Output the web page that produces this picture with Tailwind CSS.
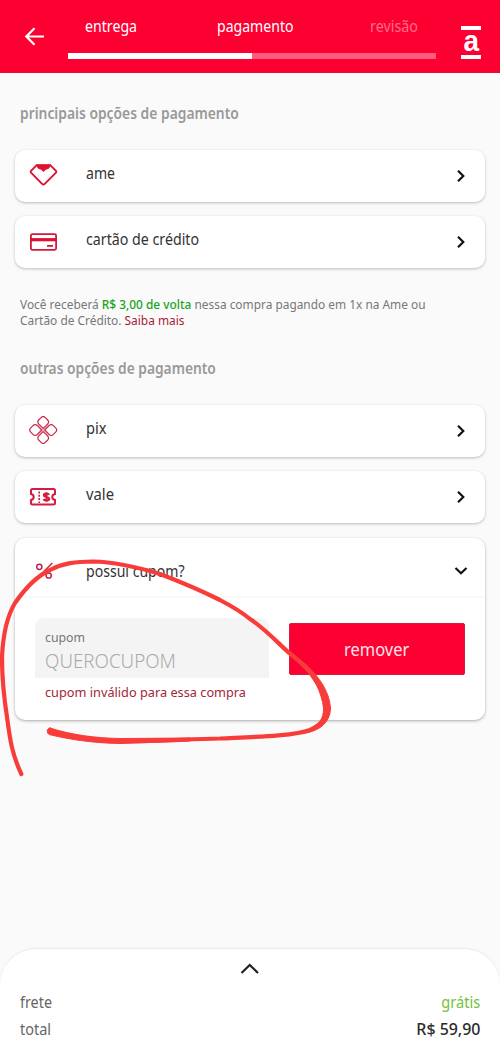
<!DOCTYPE html>
<html lang="pt-BR"><head><meta charset="utf-8"><title>pagamento</title>
<script src="https://cdn.jsdelivr.net/npm/@tailwindcss/browser@4"></script></head>
<body class="bg-[#fafafa]">
<div class="relative w-[500px] h-[1052px] overflow-hidden bg-[#fafafa] font-['Noto_Sans',sans-serif] text-[#333] flex flex-col whitespace-nowrap">
<header class="h-[73px] shrink-0 bg-[#fc0032] border-b border-[#dd1039] flex text-white">
  <div class="w-[68px] pt-[26px] pl-[23px]"><svg width="22" height="22" viewBox="0 0 22 22" fill="none" stroke="#fff" stroke-width="2.2"><path d="M21 10.500H3M11.500 2.300L3.300 10.500L11.500 18.700"/></svg></div>
  <div class="w-[368px] pt-[15px]">
    <div class="flex text-[15.5px] leading-[22px] h-[38px]">
      <div class="w-[149px] pl-[17px]"><span class="inline-block origin-left scale-x-[0.913]">entrega</span></div>
      <div class="w-[153px]"><span class="inline-block origin-left scale-x-[0.908]">pagamento</span></div>
      <div class="text-[#fe6d8a]"><span class="inline-block origin-left scale-x-[0.925]">revisão</span></div>
    </div>
    <div class="h-[6px] bg-[#fe5c7c]"><div class="h-full w-[184px] bg-white"></div></div>
  </div>
  <div class="ml-[25px] mt-[26px] w-[20px] h-[33px] border-y-4 border-white flex items-center justify-center font-['Liberation_Sans',sans-serif] font-bold text-[30px] leading-none"><span class="-mt-[3px] scale-x-[0.93]">a</span></div>
</header>
<main class="px-[15px]">
  <h2 class="mt-[29px] pl-[5px] text-[15.5px] leading-[22px] font-semibold text-[#999]"><span class="inline-block origin-left scale-x-[0.893]">principais opções de pagamento</span></h2>
  <section class="mt-[26px] flex flex-col gap-[14px] text-[15.5px]">
    <div class="h-[52px] rounded-[10px] bg-white shadow-[0_1px_3px_rgba(0,0,0,0.25)] flex items-center px-[14px]">
      <svg class="w-[29px] h-[26px] -mt-[2px]" viewBox="0 0 29 26" fill="none" stroke="#e0102f" stroke-width="1.900" stroke-linejoin="round"><path d="M7.500 3.300H21.500L27 8.800Q27.600 9.800 27 10.600L15.500 22.100Q14.400 23 13.300 22.100L2 10.600Q1.400 9.800 2 8.800Z"/><path d="M7 3H22L19.500 6.500Q17 6.500 14.500 9.500Q12 6.500 9.500 6.500Z" fill="#e0102f" stroke-width="0.800"/></svg>
      <span class="inline-block origin-left scale-x-[0.908] ml-[28px] -mt-[5px]">ame</span>
      <svg class="ml-auto mr-[5px]" width="10" height="14" viewBox="0 0 10 14" fill="none" stroke="#111" stroke-width="2.200"><path d="M2 1.700L7.300 7L2 12.300"/></svg>
    </div>
    <div class="h-[52px] rounded-[10px] bg-white shadow-[0_1px_3px_rgba(0,0,0,0.25)] flex items-center px-[14px]">
      <svg class="w-[29px] h-[26px]" viewBox="0 0 29 26" fill="none" stroke="#d4183a" stroke-width="1.800"><rect x="1.900" y="5.200" width="25.200" height="15.600" rx="1.500"/><path d="M2 10.700H27" stroke="#e0102f" stroke-width="3.200"/><path d="M18 16.900H24"/></svg>
      <span class="inline-block origin-left scale-x-[0.917] ml-[28px] -mt-[5px]">cartão de crédito</span>
      <svg class="ml-auto mr-[5px]" width="10" height="14" viewBox="0 0 10 14" fill="none" stroke="#111" stroke-width="2.200"><path d="M2 1.700L7.300 7L2 12.300"/></svg>
    </div>
  </section>
  <p class="mt-[29px] pl-[5px] text-[12.5px] leading-[16px] text-[#777]"><span class="inline-block origin-left scale-x-[0.951]">Você receberá <b class="font-medium text-[#18a41c]">R$ 3,00 de volta</b> nessa compra pagando em 1x na Ame ou</span><br><span class="inline-block origin-left scale-x-[0.952]">Cartão de Crédito. <a class="text-[#a81c34]">Saiba mais</a></span></p>
  <h2 class="mt-[28px] pl-[5px] text-[15.5px] leading-[22px] font-semibold text-[#999]"><span class="inline-block origin-left scale-x-[0.889]">outras opções de pagamento</span></h2>
  <section class="mt-[26px] flex flex-col gap-[14px] text-[15.5px]">
    <div class="h-[52px] rounded-[10px] bg-white shadow-[0_1px_3px_rgba(0,0,0,0.25)] flex items-center px-[14px]">
      <svg class="w-[29px] h-[28px] -mt-[2px]" viewBox="0 0 29 28" fill="none" stroke="#ca2848" stroke-width="1.200"><g transform="translate(14.200 14) rotate(45)"><path id="tile" d="M1.100 1.100H7.200Q10.300 1.100 10.300 4.200V7.300Q10.300 10.300 7.300 10.300H4.200Q1.100 10.300 1.100 7.200Z"/><use href="#tile" transform="rotate(90)"/><use href="#tile" transform="rotate(180)"/><use href="#tile" transform="rotate(270)"/><path d="M-8 0H8M0-8V8" stroke-opacity="0.350"/></g></svg>
      <span class="inline-block origin-left scale-x-[0.945] ml-[28px] -mt-[5px]">pix</span>
      <svg class="ml-auto mr-[5px]" width="10" height="14" viewBox="0 0 10 14" fill="none" stroke="#111" stroke-width="2.200"><path d="M2 1.700L7.300 7L2 12.300"/></svg>
    </div>
    <div class="h-[52px] rounded-[10px] bg-white shadow-[0_1px_3px_rgba(0,0,0,0.25)] flex items-center px-[14px]">
      <svg class="w-[29px] h-[26px] -mt-px" viewBox="0 0 29 26" fill="none" stroke="#d41c40" stroke-width="2"><path d="M3.500 5H24.500Q26 5 26 6.500V10Q23.300 10.500 23.300 13T26 16V19Q26 20.500 24.500 20.500H3.500Q2 20.500 2 19V16Q4.700 15.500 4.700 13T2 10V6.500Q2 5 3.500 5Z"/><path d="M10.200 7.500V19" stroke-width="1.600" stroke-dasharray="2 1.300"/><path d="M20 10.800C19.400 9 14.900 9 14.900 11.200C14.900 13.400 20.200 12.600 20.200 14.900C20.200 17.200 15.200 17 14.600 15M17.500 8.200V17.700" stroke-width="2.100"/></svg>
      <span class="inline-block origin-left scale-x-[0.955] ml-[28px] -mt-[5px]">vale</span>
      <svg class="ml-auto mr-[5px]" width="10" height="14" viewBox="0 0 10 14" fill="none" stroke="#111" stroke-width="2.200"><path d="M2 1.700L7.300 7L2 12.300"/></svg>
    </div>
    <div class="mt-px h-[182px] rounded-[10px] bg-white shadow-[0_1px_3px_rgba(0,0,0,0.32)]">
      <div class="h-[60px] border-b-2 border-[#f9f9f9] flex items-center px-[14px] pt-[10px]">
        <svg class="w-[29px] h-[20px] -mt-[3px]" viewBox="0 0 29 20" fill="none" stroke="#c3234a" stroke-width="1.500"><path d="M23.300 2L7.500 18"/><circle cx="10.300" cy="5.800" r="2.600"/><circle cx="19.700" cy="14.500" r="2.600"/></svg>
        <span class="inline-block origin-left scale-x-[0.908] ml-[28px]">possui cupom?</span>
        <svg class="ml-auto mr-[3px] -mt-[2px]" width="14" height="10" viewBox="0 0 14 10" fill="none" stroke="#111" stroke-width="2.200"><path d="M1.500 2L7 7.300L12.500 2"/></svg>
      </div>
      <div class="flex items-start px-[20px] pt-[20px]">
        <div class="w-[234px]">
          <div class="h-[60px] rounded-t-[9px] bg-[#f4f4f4] pl-[10px] pt-[11px]">
            <div class="text-[13px] leading-[17px] text-[#777]"><span class="inline-block origin-left scale-x-[0.947]">cupom</span></div>
            <div class="mt-[2px] text-[20px] leading-[26px] font-light text-[#aaa]"><span class="inline-block origin-left scale-x-[0.937]">QUEROCUPOM</span></div>
          </div>
          <div class="pl-[10px] pt-[6px] text-[13px] leading-[17px] text-[#a32636]"><span class="inline-block origin-left scale-x-[0.98]">cupom inválido para essa compra</span></div>
        </div>
        <button class="ml-[20px] mt-[5px] w-[176px] h-[52px] rounded-[2px] bg-[#fc0032] border border-[#d51c42] text-[#ffe3ea] text-[17.500px] leading-[22px]"><span class="inline-block scale-x-[0.94]">remover</span></button>
      </div>
    </div>
  </section>
</main>
<footer class="mt-auto h-[103px] rounded-t-[36px] bg-white shadow-[0_-1px_2px_rgba(0,0,0,0.07)] px-[20px] pt-[13px] text-[15.500px] leading-[22px] text-[#666]">
  <svg class="mx-auto" width="20" height="14" viewBox="0 0 20 14" fill="none" stroke="#222" stroke-width="2.200"><path d="M1.500 11L9.700 3L18 11"/></svg>
  <div class="mt-[15px] flex justify-between"><span class="inline-block origin-left scale-x-[0.927]">frete</span><span class="inline-block origin-right scale-x-[0.944] text-[#74c13a]">grátis</span></div>
  <div class="mt-[5px] flex justify-between"><span class="inline-block origin-left scale-x-[0.932]">total</span><span class="inline-block origin-right scale-x-[0.965] text-[16.500px] font-medium text-[#2b2b2b]">R$ 59,90</span></div>
</footer>
<svg class="absolute inset-0 pointer-events-none" width="500" height="1052" viewBox="0 0 500 1052" fill="none" stroke="#f83c3a" stroke-linecap="round" stroke-linejoin="round">
  <path stroke-width="4.200" d="M21.300 774C12 754 10 740 7 717C4 698 2 680 2 657C3 635 6 618 15 603C24 590 37 576 50 570C63 563 76 561.500 93 561.500C115 562 137 567 160 574C181 582 202 591 220 600C235 608 243 613 250 619C264 628 276 641 288 652C298 660 306 666 312 675C321 687 326 700 327 709C326 721 317 727 310 730C295 736 250 737 220 738.500C180 739.500 150 741.500 120 741C92 740 70 737 51 731"/>
  <path fill="#f83c3a" stroke-width="1" d="M298 658C318 673 330 692 330.500 709C330 722 320 730 308 732.500C318 726 324 719 323.500 708C322 694 314 675 298 658Z"/>
  <path fill="#f83c3a" stroke-width="1" d="M50 728C72 735 95 738 120 738.500L190 738V741L120 743.500C90 743 68 739 49 734.500C46 732 47 728 50 728Z"/>
</svg>
</div>
</body></html>
